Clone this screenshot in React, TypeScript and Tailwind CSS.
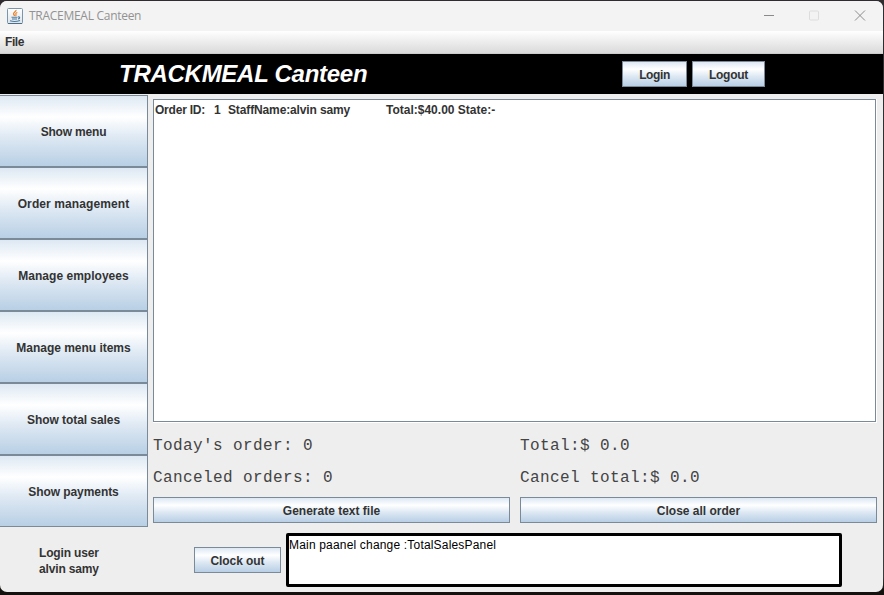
import React from "react";

const metal =
  "flex items-center justify-center border border-[#7a8a99] bg-[linear-gradient(to_bottom,#dde8f3_0%,#ffffff_30%,#dde8f3_60%,#b8cfe5_100%)] whitespace-nowrap pt-px";

function Button({ label, className, text = "" }: { label: string; className: string; text?: string }) {
  return (
    <button className={`${metal} ${className}`}>
      <span className={text}>{label}</span>
    </button>
  );
}

const sideItems = [
  { label: "Show menu", text: "tracking-[-0.18px]" },
  { label: "Order management", text: "tracking-[0.1px]" },
  { label: "Manage employees", text: "tracking-[0.02px]" },
  { label: "Manage menu items", text: "tracking-[-0.02px]" },
  { label: "Show total sales", text: "tracking-[-0.06px]" },
  { label: "Show payments", text: "tracking-[-0.08px]" },
];

function JavaIcon() {
  return (
    <svg width="16" height="16" viewBox="0 0 16 16" fill="none">
      <defs>
        <linearGradient id="tile" x1="0" y1="0" x2="0" y2="1">
          <stop offset="0" stopColor="#ffffff" />
          <stop offset="1" stopColor="#dce4ea" />
        </linearGradient>
      </defs>
      <rect x=".5" y=".5" width="15" height="15" rx="1" fill="url(#tile)" stroke="#7896ac" />
      <path d="M1 15.5h14" stroke="#496f8c" />
      <path d="M9 2c.4 1.700-3 2.300-2.400 4 .2.700.9 1 .8 2" stroke="#e9852c" strokeWidth="1.400" />
      <path d="M10.300 4.500C8.700 5 8.500 5.800 9 6.500c.3.500 0 1-.5 1.500" stroke="#e9852c" strokeWidth="1.200" />
      <path d="M4.500 9.200h6M5 11h5" stroke="#507b9b" strokeWidth="1.100" />
      <path d="M11 9c2.300-.6 2.200 1.600 0 2M3 12.700c2.500.9 7.200.8 10-.2" stroke="#507b9b" strokeWidth="1.100" />
    </svg>
  );
}

export default function App() {
  return (
    <div className="h-[595px] w-[884px] overflow-hidden bg-[linear-gradient(to_bottom,#2f2b2e_0%,#3c3a3a_97%,#15110e_99%)] pt-px font-['Liberation_Sans',Arial,sans-serif] text-[12px] font-bold leading-4 text-[#333333]">
      <div className="flex h-[591px] w-[883px] flex-col overflow-hidden rounded-[7px] bg-[#eeeeee]">
        <header className="flex h-[30px] shrink-0 items-center bg-[#f3f3f3] pl-[7px]">
          <JavaIcon />
          <span className="ml-[6px] font-['Open_Sans',sans-serif] text-[12px] font-normal tracking-[-0.28px] text-[#929292]">
            TRACEMEAL Canteen
          </span>
          <svg className="ml-auto mr-[17px]" width="102" height="12" viewBox="0 0 102 12" fill="none">
            <path d="M0 5.500h10" stroke="#8a8a8a" />
            <rect x="45.500" y="1" width="9" height="9" rx="1" stroke="#dddddd" />
            <path d="M91 .5l10 10M101 .5l-10 10" stroke="#8c8c8c" />
          </svg>
        </header>
        <nav className="flex h-[23px] shrink-0 items-center border-b border-[#cccccc] bg-linear-to-b from-white to-[#dadada] pl-[5px] tracking-[-0.4px]">
          File
        </nav>
        <div className="flex h-10 shrink-0 items-center bg-black pl-[119px]">
          <h1 className="w-[503px] whitespace-nowrap text-[24px] italic leading-10 tracking-[-0.27px] text-white">
            TRACKMEAL Canteen
          </h1>
          <Button label="Login" text="tracking-[-0.4px]" className="h-[26px] w-[65px]" />
          <Button label="Logout" text="tracking-[-0.25px]" className="ml-[5px] h-[26px] w-[73px]" />
        </div>
        <main className="flex h-[433px] shrink-0 pt-px">
          <aside className="flex w-[148px] shrink-0 flex-col">
            {sideItems.map((item) => (
              <Button key={item.label} label={item.label} text={item.text} className="h-[72px] w-full border-l-0" />
            ))}
          </aside>
          <section className="ml-[5px] mt-1 w-[724px]">
            <div className="h-[324px] border-b border-r border-white">
              <div className="h-[323px] whitespace-pre border border-[#7a8a99] bg-white pl-px pt-[2px]">
                <div className="flex">
                  <span className="w-[59px] tracking-[-0.22px]">Order ID:</span>
                  <span className="w-[14px]">1</span>
                  <span className="w-[158px] tracking-[-0.13px]">StaffName:alvin samy</span>
                  <span>Total:$40.00 State:-</span>
                </div>
              </div>
            </div>
            <div className="mt-[7px] grid h-16 grid-cols-[367px_357px] grid-rows-2 items-center whitespace-pre font-['Liberation_Mono','Courier_New',monospace] text-[16px] font-normal tracking-[0.4px] text-[#444444]">
              <span>Today's order: 0</span>
              <span>Total:$ 0.0</span>
              <span>Canceled orders: 0</span>
              <span>Cancel total:$ 0.0</span>
            </div>
            <div className="mt-[3px] flex gap-[10px]">
              <Button label="Generate text file" className="h-[26px] w-[357px]" />
              <Button label="Close all order" className="h-[26px] w-[357px]" />
            </div>
          </section>
        </main>
        <footer className="flex grow items-start">
          <div className="ml-[39px] mt-[18px] w-[155px] tracking-[-0.16px]">
            <div>Login user</div>
            <div>alvin samy</div>
          </div>
          <Button label="Clock out" text="tracking-[-0.08px]" className="mt-5 h-[26px] w-[87px]" />
          <div className="ml-[5px] mt-[6px] h-[54px] w-[556px] rounded-[2px] border-[3px] border-black bg-white pt-px font-normal tracking-[0.18px] text-black">
            Main paanel change :TotalSalesPanel
          </div>
        </footer>
      </div>
    </div>
  );
}
